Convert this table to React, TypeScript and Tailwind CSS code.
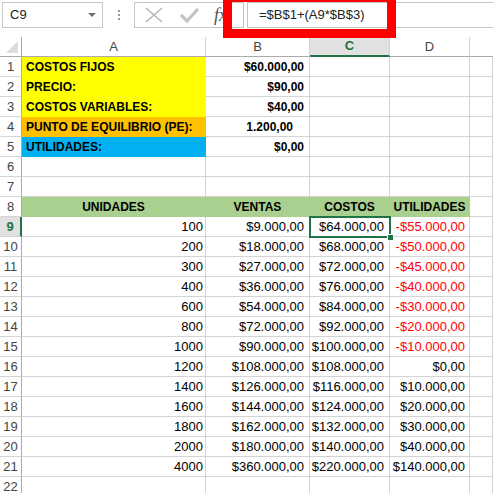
import React from "react";

type Row = {
  n: number;
  a?: string;
  b?: string;
  c?: string;
  d?: string;
  red?: boolean;
};

const rows: Row[] = [
  { n: 9, a: "100", b: "$9.000,00", c: "$64.000,00", d: "-$55.000,00", red: true },
  { n: 10, a: "200", b: "$18.000,00", c: "$68.000,00", d: "-$50.000,00", red: true },
  { n: 11, a: "300", b: "$27.000,00", c: "$72.000,00", d: "-$45.000,00", red: true },
  { n: 12, a: "400", b: "$36.000,00", c: "$76.000,00", d: "-$40.000,00", red: true },
  { n: 13, a: "600", b: "$54.000,00", c: "$84.000,00", d: "-$30.000,00", red: true },
  { n: 14, a: "800", b: "$72.000,00", c: "$92.000,00", d: "-$20.000,00", red: true },
  { n: 15, a: "1000", b: "$90.000,00", c: "$100.000,00", d: "-$10.000,00", red: true },
  { n: 16, a: "1200", b: "$108.000,00", c: "$108.000,00", d: "$0,00" },
  { n: 17, a: "1400", b: "$126.000,00", c: "$116.000,00", d: "$10.000,00" },
  { n: 18, a: "1600", b: "$144.000,00", c: "$124.000,00", d: "$20.000,00" },
  { n: 19, a: "1800", b: "$162.000,00", c: "$132.000,00", d: "$30.000,00" },
  { n: 20, a: "2000", b: "$180.000,00", c: "$140.000,00", d: "$40.000,00" },
  { n: 21, a: "4000", b: "$360.000,00", c: "$220.000,00", d: "$140.000,00" },
  { n: 22 },
];

const cellBase =
  "border-r border-b flex items-center whitespace-nowrap overflow-hidden leading-none";

function RowHead({ n, active }: { n: number; active?: boolean }) {
  return (
    <div
      className={
        active
          ? "border-b border-b-[#d4d4d4] border-r-2 border-r-[#217346] bg-[#e1e1e1] flex items-center justify-center text-[13px] font-bold text-[#217346]"
          : "border-b border-b-[#d4d4d4] border-r border-r-[#ababab] flex items-center justify-center text-[13px] text-[#444]"
      }
    >
      {n}
    </div>
  );
}

function Num({ v, red, pad }: { v?: string; red?: boolean; pad?: string }) {
  return (
    <div
      className={
        cellBase +
        " border-[#d4d4d4] justify-end text-[13px] " +
        (red ? "text-[#ff0000] " : "text-black ") +
        (pad || "pr-[5px]")
      }
    >
      {v}
    </div>
  );
}

function Blank() {
  return <div className={cellBase + " border-[#d4d4d4]"} />;
}

export default function App() {
  return (
    <div className="relative w-[493px] h-[493px] overflow-hidden bg-white font-['Liberation_Sans',Arial,sans-serif]">

      {/* formula bar */}
      <div className="h-[37px] flex items-start pt-[2px]">

        <div className="ml-[2px] w-[101px] h-[26px] border border-[#c6c6c6] flex items-center justify-between pl-[7px] pr-[6px]">
          <span className="text-[13px] text-[#222]">C9</span>
          <span className="w-0 h-0 border-l-[4px] border-r-[4px] border-t-[4px] border-l-transparent border-r-transparent border-t-[#6f6f6f]" />
        </div>

        <div className="w-[31px] h-[26px] flex flex-col items-center justify-center gap-[2px]">
          <span className="w-[2px] h-[2px] bg-[#9a9a9a]" />
          <span className="w-[2px] h-[2px] bg-[#9a9a9a]" />
          <span className="w-[2px] h-[2px] bg-[#9a9a9a]" />
        </div>

        <div className="w-[110px] h-[26px] border border-[#c6c6c6] flex items-center pl-[10px]">
          <svg width="18" height="16" viewBox="0 0 18 16">
            <path d="M1 1 L17 15 M17 1 L1 15" stroke="#b4b4b4" strokeWidth="1.4" fill="none" />
          </svg>
          <svg width="19" height="16" viewBox="0 0 19 16" className="ml-[17px]">
            <path d="M1 8 L7 14 L18 2" stroke="#c4c4c4" strokeWidth="3.2" fill="none" />
          </svg>
          <span className="ml-[15px] text-[18px] italic text-[#555] font-['Liberation_Serif',serif]">fx</span>
        </div>

        <div className="ml-[3px] flex-1 h-[26px] border border-[#c6c6c6] border-r-0 flex items-center pl-[11px]">
          <span className="text-[13px] text-[#222]">=$B$1+(A9*$B$3)</span>
        </div>

      </div>

      {/* sheet */}
      <div className="relative grid grid-cols-[22px_184px_104px_80px_80px_23px] auto-rows-[20px]">

        {/* column headers */}
        <div className="border-r border-b border-r-[#ababab] border-b-[#ababab] flex items-end justify-end pr-[3px] pb-[3px]">
          <svg width="12" height="12" viewBox="0 0 12 12">
            <path d="M12 0 L12 12 L0 12 Z" fill="#dcdcdc" />
          </svg>
        </div>
        <div className="border-r border-b border-r-[#d4d4d4] border-b-[#ababab] flex items-center justify-center text-[13px] text-[#444]">A</div>
        <div className="border-r border-b border-r-[#d4d4d4] border-b-[#ababab] flex items-center justify-center text-[13px] text-[#444]">B</div>
        <div className="border-r border-b-2 border-r-[#d4d4d4] border-b-[#217346] bg-[#e1e1e1] flex items-center justify-center text-[13px] font-bold text-[#217346]">C</div>
        <div className="border-r border-b border-r-[#d4d4d4] border-b-[#ababab] flex items-center justify-center text-[13px] text-[#444]">D</div>
        <div className="border-b border-b-[#ababab]" />

        {/* rows 1-5 */}
        <RowHead n={1} />
        <div className={cellBase + " border-[#ffff00] bg-[#ffff00] pl-[4px] text-[12px] font-bold text-black"}>COSTOS FIJOS</div>
        <div className={cellBase + " border-[#d4d4d4] justify-end pr-[5px] text-[12px] font-bold text-black"}>$60.000,00</div>
        <Blank />
        <Blank />
        <Blank />

        <RowHead n={2} />
        <div className={cellBase + " border-[#ffff00] bg-[#ffff00] pl-[4px] text-[12px] font-bold text-black"}>PRECIO:</div>
        <div className={cellBase + " border-[#d4d4d4] justify-end pr-[5px] text-[12px] font-bold text-black"}>$90,00</div>
        <Blank />
        <Blank />
        <Blank />

        <RowHead n={3} />
        <div className={cellBase + " border-[#ffff00] bg-[#ffff00] pl-[4px] text-[12px] font-bold text-black"}>COSTOS VARIABLES:</div>
        <div className={cellBase + " border-[#d4d4d4] justify-end pr-[5px] text-[12px] font-bold text-black"}>$40,00</div>
        <Blank />
        <Blank />
        <Blank />

        <RowHead n={4} />
        <div className={cellBase + " border-[#ffc000] bg-[#ffc000] pl-[4px] text-[12px] font-bold text-black"}>PUNTO DE EQUILIBRIO (PE):</div>
        <div className={cellBase + " border-[#d4d4d4] justify-end pr-[16px] text-[12px] font-bold text-black"}>1.200,00</div>
        <Blank />
        <Blank />
        <Blank />

        <RowHead n={5} />
        <div className={cellBase + " border-[#00b0f0] bg-[#00b0f0] pl-[4px] text-[12px] font-bold text-black"}>UTILIDADES:</div>
        <div className={cellBase + " border-[#d4d4d4] justify-end pr-[5px] text-[12px] font-bold text-black"}>$0,00</div>
        <Blank />
        <Blank />
        <Blank />

        {/* rows 6-7 */}
        {[6, 7].map((n) => (
          <React.Fragment key={n}>
            <RowHead n={n} />
            <Blank />
            <Blank />
            <Blank />
            <Blank />
            <Blank />
          </React.Fragment>
        ))}

        {/* row 8 */}
        <RowHead n={8} />
        <div className={cellBase + " border-[#a9d08e] bg-[#a9d08e] justify-center text-[12px] font-bold text-black"}>UNIDADES</div>
        <div className={cellBase + " border-[#a9d08e] bg-[#a9d08e] justify-center text-[12px] font-bold text-black"}>VENTAS</div>
        <div className={cellBase + " border-[#a9d08e] bg-[#a9d08e] justify-center text-[12px] font-bold text-black"}>COSTOS</div>
        <div className={cellBase + " border-[#a9d08e] bg-[#a9d08e] justify-center text-[12px] font-bold text-black"}>UTILIDADES</div>
        <Blank />

        {/* data */}
        {rows.map((r) => (
          <React.Fragment key={r.n}>
            <RowHead n={r.n} active={r.n === 9} />
            <Num v={r.a} pad="pr-[2px]" />
            <Num v={r.b} />
            <Num v={r.c} />
            <Num v={r.d} red={r.red} pad="pr-[4px]" />
            <Blank />
          </React.Fragment>
        ))}

        {/* selected cell C9 */}
        <div className="absolute left-[309px] top-[179px] w-[82px] h-[22px] border-2 border-[#217346]" />
        <div className="absolute left-[387px] top-[197px] w-[7px] h-[7px] bg-[#217346] border border-white" />
      </div>

      {/* red annotation box */}
      <div className="absolute left-[223px] top-[-7px] w-[173px] h-[45px] border-[9px] border-[#ff0000]" />
    </div>
  );
}
